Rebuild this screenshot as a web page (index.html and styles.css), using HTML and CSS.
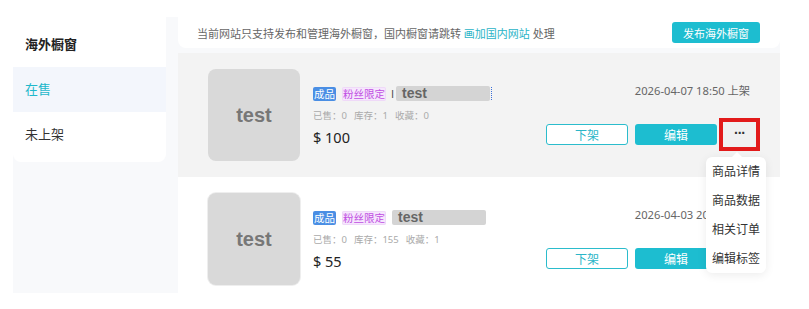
FILE: index.html
```html
<!DOCTYPE html>
<html lang="zh-CN">
<head>
    <meta charset="UTF-8">
    <meta name="viewport" content="width=device-width, initial-scale=1.0">
    <title>海外橱窗</title>
    <link rel="stylesheet" href="styles.css">
</head>
<body>
    <div class="layout">
        <div class="sidebar">
            <div class="side-title">海外橱窗</div>
            <div class="side-item active">在售</div>
            <div class="side-item">未上架</div>
        </div>

        <div class="main">
            <div class="notice">
                <p>当前网站只支持发布和管理海外橱窗，国内橱窗请跳转 <a href="#">画加国内网站</a> 处理</p>
                <button class="btn-publish">发布海外橱窗</button>
            </div>

            <div class="card hover">
                <div class="thumb">test</div>
                <div class="info">
                    <div class="tags">
                        <span class="tag tag-done">成品</span>
                        <span class="tag tag-fans">粉丝限定</span>
                        <span class="cursor">I</span>
                        <span class="title">test</span>
                        <span class="caret"></span>
                    </div>
                    <div class="stats"><span>已售：0</span><span>库存：1</span><span>收藏：0</span></div>
                    <div class="price">$ 100</div>
                </div>
                <div class="side">
                    <div class="date">2026-04-07 18:50 上架</div>
                    <div class="actions">
                        <button class="btn-line">下架</button>
                        <button class="btn-fill">编辑</button>
                        <div class="more-wrap">
                            <button class="btn-more marked">···</button>
                            <ul class="dropdown">
                                <li>商品详情</li>
                                <li>商品数据</li>
                                <li>相关订单</li>
                                <li>编辑标签</li>
                            </ul>
                        </div>
                    </div>
                </div>
            </div>

            <div class="card">
                <div class="thumb framed">test</div>
                <div class="info">
                    <div class="tags">
                        <span class="tag tag-done">成品</span>
                        <span class="tag tag-fans">粉丝限定</span>
                        <span class="title">test</span>
                    </div>
                    <div class="stats"><span>已售：0</span><span>库存：155</span><span>收藏：1</span></div>
                    <div class="price">$ 55</div>
                </div>
                <div class="side">
                    <div class="date">2026-04-03 20:16 上架</div>
                    <div class="actions">
                        <button class="btn-line">下架</button>
                        <button class="btn-fill">编辑</button>
                        <div class="more-wrap">
                            <button class="btn-more">···</button>
                        </div>
                    </div>
                </div>
            </div>
        </div>
    </div>
</body>
</html>
```

FILE: styles.css
```css
body {
    margin: 0;
    background: #fff;
    font-family: "Noto Sans", "Noto Sans CJK SC", sans-serif;
    color: #333;
}

.layout {
    display: flex;
    gap: 12px;
    width: 767px;
    height: 276px;
    margin: 17px 0 0 13px;
    background: #f8f9fb;
    overflow: hidden;
}

/* left menu */
.sidebar {
    width: 153px;
    flex-shrink: 0;
    align-self: flex-start;
    background: #fff;
    border-radius: 0 0 8px 8px;
    padding-bottom: 5px;
}

.side-title {
    height: 50px;
    box-sizing: border-box;
    padding: 19px 0 0 12px;
    line-height: 16px;
    font-size: 13px;
    font-weight: bold;
    color: #222;
}

.side-item {
    height: 45px;
    line-height: 45px;
    padding-left: 12px;
    font-size: 13px;
    color: #333;
}

.side-item.active {
    background: #f3f6fc;
    color: #1fb8cb;
}

/* main column */
.main {
    flex: 1;
    display: flex;
    flex-direction: column;
}

.notice {
    height: 31px;
    flex-shrink: 0;
    margin-bottom: 5px;
    display: flex;
    align-items: center;
    justify-content: space-between;
    padding: 0 20px 0 19px;
    background: #fff;
    border-radius: 0 0 8px 8px;
}

.notice p {
    margin: 0;
    font-size: 11px;
    color: #666;
}

.notice a {
    color: #2ab4c7;
    text-decoration: none;
}

.btn-publish {
    width: 88px;
    height: 21px;
    padding: 0;
    border: none;
    border-radius: 3px;
    background: #1dbdd0;
    color: #fff;
    font-family: inherit;
    font-size: 11px;
}

/* product cards */
.card {
    position: relative;
    height: 124px;
    flex-shrink: 0;
    box-sizing: border-box;
    display: flex;
    padding: 16px 24px 16px 30px;
    background: #fff;
}

.card.hover {
    background: #f3f3f3;
    z-index: 2;
}

.thumb {
    width: 92px;
    height: 92px;
    flex-shrink: 0;
    display: flex;
    align-items: center;
    justify-content: center;
    background: #d9d9d9;
    border-radius: 8px;
    font-family: "Liberation Sans", Arial, sans-serif;
    font-size: 20px;
    font-weight: bold;
    color: #777;
}

.thumb.framed {
    box-shadow: 0 0 0 1px #eee;
}

.info {
    flex: 1;
    margin-left: 13px;
    padding-top: 17px;
}

.tags {
    display: flex;
    align-items: center;
    height: 15px;
}

.tag {
    height: 14px;
    line-height: 14px;
    padding: 0 1px;
    margin-right: 6px;
    font-size: 10.5px;
    border-radius: 2px;
}

.tag-done {
    background: #4a8ee4;
    color: #fff;
}

.tag-fans {
    background: #f6e7fd;
    color: #c04ee2;
    box-shadow: inset 0 0 0 1px #efd9f8;
}

.cursor {
    font-family: "Liberation Sans", Arial, sans-serif;
    font-size: 11px;
    color: #555;
    margin: 0 2px 0 -1px;
}

.title {
    width: 88px;
    height: 15px;
    line-height: 15px;
    padding-left: 6px;
    background: #d4d4d4;
    border-radius: 2px;
    font-family: "Liberation Sans", Arial, sans-serif;
    font-size: 14px;
    font-weight: bold;
    color: #666;
}

.caret {
    width: 0;
    height: 13px;
    margin-left: 1px;
    border-left: 1px dotted #3a6fd8;
}

.stats {
    margin-top: 8px;
    line-height: 14px;
    font-size: 9.5px;
    color: #aaa;
}

.stats span {
    margin-right: 7px;
}

.price {
    margin-top: 4px;
    line-height: 20px;
    font-size: 14.5px;
    color: #222;
}

.side {
    display: flex;
    flex-direction: column;
    align-items: flex-end;
    padding-top: 14px;
}

.date {
    line-height: 16px;
    padding-right: 6px;
    font-size: 11.2px;
    color: #666;
}

.actions {
    display: flex;
    align-items: center;
    gap: 7px;
    margin-top: 23px;
}

.btn-line,
.btn-fill {
    width: 82px;
    height: 21px;
    padding: 0;
    border-radius: 3px;
    font-family: inherit;
    font-size: 12px;
}

.btn-line {
    background: #fff;
    border: 1px solid #2bbccc;
    color: #2bb5c8;
}

.btn-fill {
    background: #1dbdd0;
    border: none;
    color: #fff;
}

.more-wrap {
    position: relative;
    margin-left: -1px;
}

.btn-more {
    display: block;
    width: 33px;
    height: 25px;
    padding: 0 0 4px;
    border: none;
    background: #f0f0f0;
    color: #333;
    font-size: 14px;
    font-weight: bold;
    letter-spacing: -1px;
}

.btn-more.marked {
    outline: 4px solid #e21a1a;
}

.dropdown {
    position: absolute;
    top: 35px;
    left: -17px;
    width: 60px;
    margin: 0;
    padding: 0;
    list-style: none;
    background: #fff;
    border-radius: 6px;
    box-shadow: 0 2px 10px rgba(0, 0, 0, 0.08);
    z-index: 10;
}

.dropdown::before {
    content: "";
    position: absolute;
    top: -5px;
    left: 26px;
    border: 5px solid transparent;
    border-top: none;
    border-bottom-color: #fff;
}

.dropdown li {
    height: 29px;
    line-height: 29px;
    text-align: center;
    font-size: 12px;
    color: #333;
}
```
